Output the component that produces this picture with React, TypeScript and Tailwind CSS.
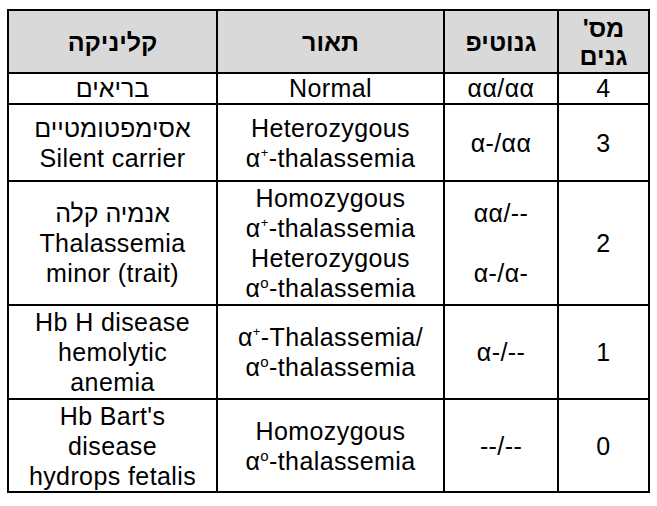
import React from 'react';

const Alpha: React.FC<{ sup: string }> = ({ sup }) => (
  <>
    α<sup className={sup === '+' ? 'text-[13px] relative -top-[10px]' : 'text-[15px] relative -top-[9px]'}>{sup}</sup>
  </>
);

const cell = 'border-2 border-black text-center align-middle p-0';
const he = 'tracking-normal';

const App: React.FC = () => {
  return (
    <div className="w-[657px] h-[506px] bg-white pt-[9px] pl-[7px]">
      <table
        dir="rtl"
        className="border-collapse table-fixed w-[641px] text-black text-[25px] leading-[30px] tracking-[0.4px]"
        style={{ fontFamily: '"Liberation Sans", Arial, sans-serif' }}
      >
        <colgroup>
          <col className="w-[91px]" />
          <col className="w-[114px]" />
          <col className="w-[227px]" />
          <col className="w-[209px]" />
        </colgroup>
        <thead>
          <tr className="h-[63px] bg-[#d9d9d9] font-bold text-[25px] leading-[28px] tracking-normal">
            <th className={cell}>
              <div>מס'</div>
              <div>גנים</div>
            </th>
            <th className={cell}>גנוטיפ</th>
            <th className={cell}>תאור</th>
            <th className={cell}>קליניקה</th>
          </tr>
        </thead>
        <tbody>
          <tr className="h-[31px] leading-[27px]">
            <td className={cell}>4</td>
            <td className={cell}>αα/αα</td>
            <td className={cell}>Normal</td>
            <td className={`${cell} ${he}`}>בריאים</td>
          </tr>
          <tr className="h-[77px]">
            <td className={cell}>3</td>
            <td className={cell}>α-/αα</td>
            <td className={cell}>
              <div>Heterozygous</div>
              <div dir="ltr"><Alpha sup="+" />-thalassemia</div>
            </td>
            <td className={cell}>
              <div className={he}>אסימפטומטיים</div>
              <div dir="ltr">Silent carrier</div>
            </td>
          </tr>
          <tr className="h-[124px]">
            <td className={cell}>2</td>
            <td className={cell}>
              <div className="h-[60px] flex items-center justify-center" dir="ltr">αα/--</div>
              <div className="h-[60px] flex items-center justify-center" dir="ltr">α-/α-</div>
            </td>
            <td className={cell}>
              <div>Homozygous</div>
              <div dir="ltr"><Alpha sup="+" />-thalassemia</div>
              <div>Heterozygous</div>
              <div dir="ltr"><Alpha sup="o" />-thalassemia</div>
            </td>
            <td className={cell}>
              <div className={he}>אנמיה קלה</div>
              <div dir="ltr">Thalassemia</div>
              <div dir="ltr">minor (trait)</div>
            </td>
          </tr>
          <tr className="h-[94px]">
            <td className={cell}>1</td>
            <td className={cell} dir="ltr">α-/--</td>
            <td className={cell}>
              <div dir="ltr"><Alpha sup="+" />-Thalassemia/</div>
              <div dir="ltr"><Alpha sup="o" />-thalassemia</div>
            </td>
            <td className={cell}>
              <div dir="ltr">Hb H disease</div>
              <div dir="ltr">hemolytic</div>
              <div dir="ltr">anemia</div>
            </td>
          </tr>
          <tr className="h-[93px]">
            <td className={cell}>0</td>
            <td className={cell} dir="ltr">--/--</td>
            <td className={cell}>
              <div>Homozygous</div>
              <div dir="ltr"><Alpha sup="o" />-thalassemia</div>
            </td>
            <td className={cell}>
              <div dir="ltr">Hb Bart's</div>
              <div dir="ltr">disease</div>
              <div dir="ltr">hydrops fetalis</div>
            </td>
          </tr>
        </tbody>
      </table>
    </div>
  );
};

export default App;
